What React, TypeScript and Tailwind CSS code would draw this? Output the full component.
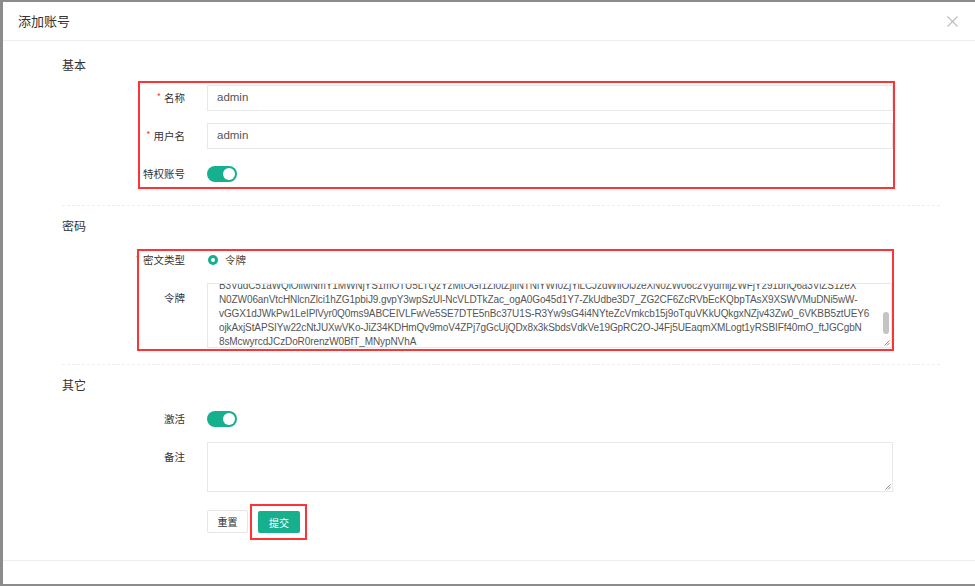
import React from "react";

const GREEN = "bg-[#16b08e]";
const LATIN = '"Liberation Sans", "Noto Sans CJK SC", sans-serif';

function Toggle() {
  return (
    <div className={`w-[30px] h-[16px] rounded-full ${GREEN} flex items-center justify-end pr-[2px]`}>
      <div className="w-[12px] h-[12px] rounded-full bg-white" />
    </div>
  );
}

function Label({ text, req }: { text: string; req?: boolean }) {
  return (
    <div className="w-[45px] shrink-0 flex items-center justify-end text-[10.5px] text-[#333] whitespace-nowrap">
      {req && <span className="text-[#f33] text-[9px] mr-[3px] -mt-[3px]">*</span>}
      {text}
    </div>
  );
}

const tokenLines = [
  "B3VudC51aWQiOiIwNmY1MWNjYS1mOTU5LTQzYzMtOGI1ZI0tZjIiNTNiYWI0ZjYiLCJzdWIiOiJzeXN0ZW06c2VydmljZWFjY291bnQ6a3ViZS1zeX",
  "N0ZW06anVtcHNlcnZlci1hZG1pbiJ9.gvpY3wpSzUl-NcVLDTkZac_ogA0Go45d1Y7-ZkUdbe3D7_ZG2CF6ZcRVbEcKQbpTAsX9XSWVMuDNi5wW-",
  "vGGX1dJWkPw1LeIPlVyr0Q0ms9ABCEIVLFwVe5SE7DTE5nBc37U1S-R3Yw9sG4i4NYteZcVmkcb15j9oTquVKkUQkgxNZjv43Zw0_6VKBB5ztUEY6",
  "ojkAxjStAPSIYw22cNtJUXwVKo-JiZ34KDHmQv9moV4ZPj7gGcUjQDx8x3kSbdsVdkVe19GpRC2O-J4Fj5UEaqmXMLogt1yRSBIFf40mO_ftJGCgbN",
  "8sMcwyrcdJCzDoR0renzW0BfT_MNypNVhA",
];

function ResizeGrip() {
  return (
    <svg width="7" height="7" viewBox="0 0 7 7" className="absolute right-[1px] bottom-[1px]">
      <path d="M6.5 1.5 L1.5 6.5 M6.5 4 L4 6.5" stroke="#888" strokeWidth="0.9" />
    </svg>
  );
}

export default function App() {
  return (
    <div
      className="w-[975px] h-[586px] bg-[#8c8c8c] pl-[3px] pt-[2px] pb-[2px] overflow-hidden"
      style={{ fontFamily: '"Noto Sans CJK SC", "Noto Sans", sans-serif' }}
    >
      <div className="w-full h-full bg-white flex flex-col">
        {/* header */}
        <div className="h-[39px] shrink-0 border-b border-[#eee] flex items-center justify-between pl-[15px] pr-[17px]">
          <span className="text-[13px] text-[#333]">添加账号</span>
          <svg width="11" height="11" viewBox="0 0 11 11">
            <path d="M0.5 0.5 L10.5 10.5 M10.5 0.5 L0.5 10.5" stroke="#bbb" strokeWidth="1.1" />
          </svg>
        </div>

        {/* body */}
        <div className="flex flex-col">
          <div className="ml-[59px] mt-[14px] h-[20px] flex items-center text-[12px] text-[#333]">基本</div>

          <div className="ml-[135px] mt-[6px] w-[757px] border-2 border-[#f33] pt-[2px] flex flex-col gap-[12px]">
            <div className="flex items-center">
              <Label text="名称" req />
              <div className="ml-[22px] w-[686px] h-[26px] border border-[#e8e8e8] flex items-center pl-[9px] text-[11.5px] text-[#555]" style={{ fontFamily: LATIN }}>admin</div>
            </div>
            <div className="flex items-center">
              <Label text="用户名" req />
              <div className="ml-[22px] w-[686px] h-[26px] border border-[#e8e8e8] flex items-center pl-[9px] text-[11.5px] text-[#555]" style={{ fontFamily: LATIN }}>admin</div>
            </div>
            <div className="flex items-center h-[26px]">
              <Label text="特权账号" />
              <div className="ml-[22px]">
                <Toggle />
              </div>
            </div>
          </div>

          <div className="ml-[59px] mt-[16px] w-[878px] border-t border-dashed border-[#eee]" />

          <div className="ml-[59px] mt-[10px] h-[20px] flex items-center text-[12px] text-[#333]">密码</div>

          <div className="ml-[134px] mt-[13px] w-[757px] border-2 border-[#f33] pb-[1px] flex flex-col">
            <div className="flex items-center h-[18px]">
              <div className="w-[1px]" />
              <Label text="密文类型" req />
              <div className="ml-[22px] flex items-center">
                <div className="w-[10px] h-[10px] rounded-full bg-[#16b08e] flex items-center justify-center ml-[1px]">
                  <div className="w-[4px] h-[4px] rounded-full bg-white" />
                </div>
                <span className="ml-[7px] text-[10.5px] text-[#444]">令牌</span>
              </div>
            </div>
            <div className="flex mt-[14px]">
              <div className="w-[1px]" />
              <div className="w-[45px] shrink-0 flex justify-end pt-[7px] text-[10.5px] text-[#333]">令牌</div>
              <div className="ml-[22px] w-[686px] h-[65px] border border-[#e8e8e8] relative overflow-hidden">
                <div
                  className="pl-[11px] -mt-[5px] text-[10px] leading-[14px] tracking-[-0.1px] text-[#555] whitespace-nowrap"
                  style={{ fontFamily: LATIN }}
                >
                  {tokenLines.map((l, i) => (
                    <div key={i}>{l}</div>
                  ))}
                </div>
                <div className="absolute right-[2px] top-[28px] w-[6px] h-[22px] rounded-[3px] bg-[#c4c4c4]" />
                <ResizeGrip />
              </div>
            </div>
          </div>

          <div className="ml-[59px] mt-[13px] w-[878px] border-t border-dashed border-[#eee]" />

          <div className="ml-[59px] mt-[10px] h-[20px] flex items-center text-[12px] text-[#333]">其它</div>

          <div className="ml-[137px] mt-[11px] flex items-center h-[26px]">
            <Label text="激活" />
            <div className="ml-[22px]">
              <Toggle />
            </div>
          </div>

          <div className="ml-[137px] mt-[10px] flex">
            <div className="w-[45px] shrink-0 flex justify-end pt-[7px] text-[10.5px] text-[#333]">备注</div>
            <div className="ml-[22px] w-[686px] h-[50px] border border-[#e8e8e8] relative">
              <ResizeGrip />
            </div>
          </div>

          <div className="ml-[204px] mt-[12px] flex items-start">
            <div className="mt-[6px] w-[41px] h-[23px] border border-[#e6e6e6] rounded-[2px] flex items-center justify-center text-[10px] text-[#333]">重置</div>
            <div className="ml-[2px] w-[57px] h-[36px] border-2 border-[#f33] pl-[6px] pt-[5px]">
              <div className={`w-[42px] h-[22px] ${GREEN} rounded-[2px] flex items-center justify-center text-[10px] text-white`}>提交</div>
            </div>
          </div>

          <div className="mt-[20px] w-full border-t border-[#eee]" />
        </div>
      </div>
    </div>
  );
}
